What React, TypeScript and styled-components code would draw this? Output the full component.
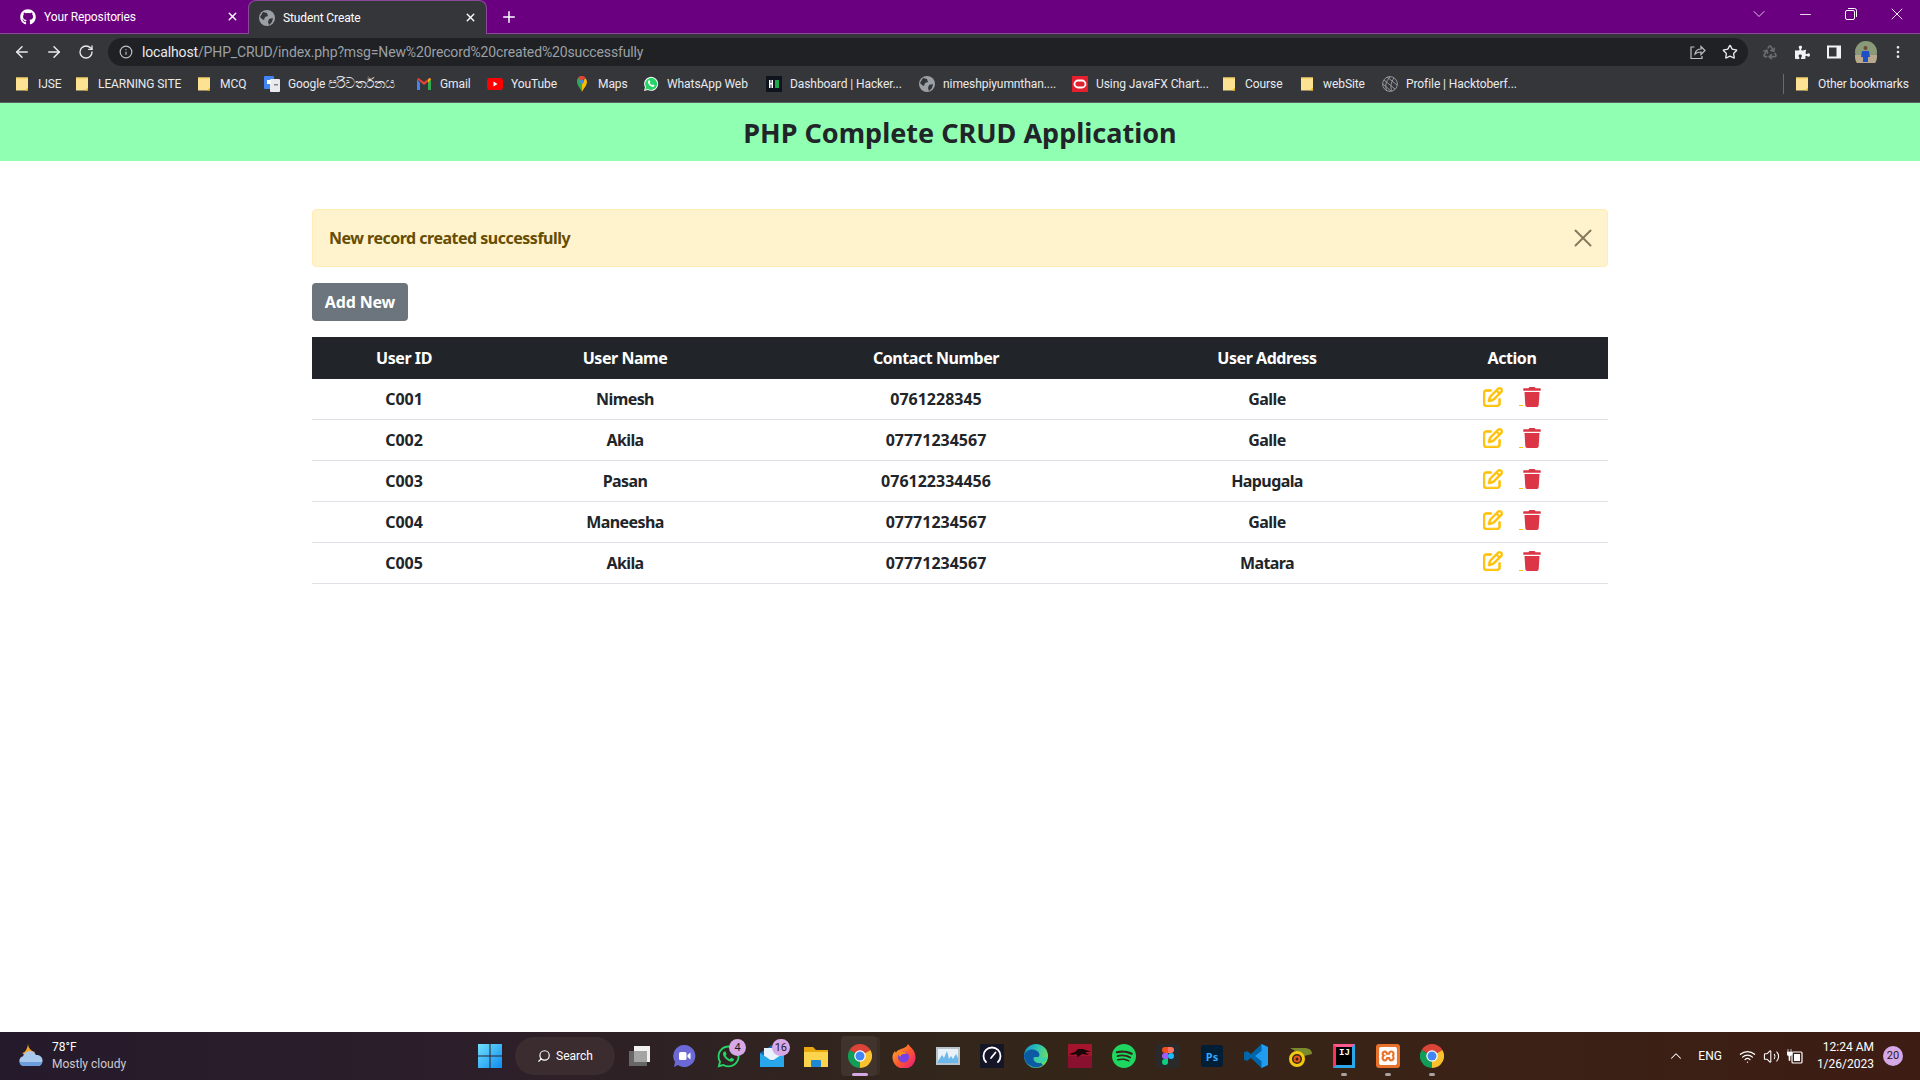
import React from 'react';
import styled, { createGlobalStyle } from 'styled-components';
import { ArrowLeft, ArrowRight, ChevronDown, ChevronUp, Info, Minus, MoreVertical, Plus, Recycle, RotateCw, Search, Star, Volume2, Wifi, X } from 'lucide-react';
import { FaGithub, FaPuzzlePiece, FaTrash, FaWhatsapp } from 'react-icons/fa';
import { FaRegPenToSquare } from 'react-icons/fa6';
import { SiSpotify, SiXampp } from 'react-icons/si';

const GlobalStyle = createGlobalStyle`
  html, body {
    margin: 0;
    padding: 0;
    background: #fff;
  }
  * {
    box-sizing: border-box;
  }
`;

const users = [
  { id: 'C001', name: 'Nimesh', contact: '0761228345', address: 'Galle' },
  { id: 'C002', name: 'Akila', contact: '07771234567', address: 'Galle' },
  { id: 'C003', name: 'Pasan', contact: '076122334456', address: 'Hapugala' },
  { id: 'C004', name: 'Maneesha', contact: '07771234567', address: 'Galle' },
  { id: 'C005', name: 'Akila', contact: '07771234567', address: 'Matara' },
];

const Folder = () => (
  <svg width="16" height="16" viewBox="0 0 16 16">
    <path d="M2 1.500h12v13H2z" fill="#fde293" />
    <path d="M11 14.500l3-3v3z" fill="#f2b90f" />
    <path d="M2 1.500h12v1H2z" fill="#f2c94c" />
  </svg>
);

const Globe = ({ color = '#9aa0a6' }: { color?: string }) => (
  <svg width="16" height="16" viewBox="0 0 16 16">
    <circle cx="8" cy="8" r="8" fill={color} />
    <path d="M4 2l4 1 1 3-3 1-1 3-2-1-2-2zM10 9l4-1-1 4-3 3-1-3z" fill="#35363a" />
  </svg>
);

const Translate = () => (
  <svg width="16" height="16" viewBox="0 0 16 16">
    <rect x="0" y="0" width="10" height="13" rx="1" fill="#4285f4" />
    <rect x="6" y="3" width="10" height="13" rx="1" fill="#e8eaed" />
    <rect x="3" y="4" width="4" height="4" fill="#fff" />
    <rect x="10" y="8" width="4" height="1.5" fill="#80868b" />
  </svg>
);

const Gmail = () => (
  <svg width="16" height="16" viewBox="0 0 16 16">
    <path d="M1 3v11h3V7z" fill="#4285f4" />
    <path d="M15 3v11h-3V7z" fill="#34a853" />
    <path d="M1 3l7 6 7-6-1.5-1L8 6 2.500 2z" fill="#ea4335" />
    <path d="M15 3l-3 4V4l1.500-2z" fill="#fbbc04" />
  </svg>
);

const YouTube = () => (
  <svg width="16" height="16" viewBox="0 0 16 16">
    <rect x="0" y="2" width="16" height="12" rx="3" fill="#f00" />
    <path d="M6.500 5.500v5l4-2.500z" fill="#fff" />
  </svg>
);

const MapsPin = () => (
  <svg width="16" height="16" viewBox="0 0 16 16">
    <path d="M8 16c-1-3-5-6-5-10.500A5 5 0 0 1 8 0v16z" fill="#34a853" />
    <path d="M8 16c1-3 5-6 5-10.500A5 5 0 0 0 11 2L8 8z" fill="#fbbc04" />
    <path d="M4 2a5 5 0 0 1 7.500-.5L8 5z" fill="#ea4335" />
    <circle cx="8" cy="5.500" r="2" fill="#4285f4" />
  </svg>
);

const HackerRank = () => (
  <svg width="16" height="16" viewBox="0 0 16 16">
    <rect width="16" height="16" fill="#0e141e" />
    <path d="M3 4h1.500v3h1V4H7v8H5.500V8.500h-1V12H3z" fill="#fff" />
    <rect x="9" y="4" width="4" height="8" fill="#1ba94c" />
  </svg>
);

const Oracle = () => (
  <svg width="16" height="16" viewBox="0 0 16 16">
    <rect width="16" height="16" fill="#e5202e" />
    <rect x="2.500" y="4.500" width="11" height="7" rx="3.500" fill="none" stroke="#fff" strokeWidth="1.800" />
  </svg>
);

const Hacktoberfest = () => (
  <svg width="16" height="16" viewBox="0 0 16 16" fill="none" stroke="#9aa0a6" strokeWidth="0.900">
    <circle cx="8" cy="8" r="7.400" />
    <path d="M2 4l11 9M1 8l8 7M5 1l10 8M8 1C3 6 3 11 5 15M12 2c-3 4-4 9-2 13" />
  </svg>
);

const WhatsAppMark = () => (
  <svg width="16" height="16" viewBox="0 0 16 16">
    <path d="M1 15l1-3.800A7 7 0 1 1 4.800 14z" fill="#fff" />
    <path d="M2.200 13.800l.8-2.800A6 6 0 1 1 5 13z" fill="#25d366" />
    <path d="M5.500 4.500c1-.8 1.300 0 1.800 1.200.2.600-.5 1-.4 1.300.5 1 1 1.500 2 2 .4.100.7-.7 1.200-.5 1.300.6 1.800.8 1.200 1.700-1.200 1.500-3.500.3-5-1.200-1.300-1.400-1.800-3.300-.8-4.500z" fill="#fff" />
  </svg>
);

const bookmarks: { label: string; sinhala?: string; icon: React.ReactNode; width: number }[] = [
  { label: 'IJSE', icon: <Folder />, width: 20 },
  { label: 'LEARNING SITE', icon: <Folder />, width: 82 },
  { label: 'MCQ', icon: <Folder />, width: 28 },
  { label: 'Google ', sinhala: 'පරිවර්තනය', icon: <Translate />, width: 112 },
  { label: 'Gmail', icon: <Gmail />, width: 31 },
  { label: 'YouTube', icon: <YouTube />, width: 47 },
  { label: 'Maps', icon: <MapsPin />, width: 29 },
  { label: 'WhatsApp Web', icon: <WhatsAppMark />, width: 83 },
  { label: 'Dashboard | Hacker...', icon: <HackerRank />, width: 113 },
  { label: 'nimeshpiyumnthan....', icon: <Globe />, width: 113 },
  { label: 'Using JavaFX Chart...', icon: <Oracle />, width: 109 },
  { label: 'Course', icon: <Folder />, width: 38 },
  { label: 'webSite', icon: <Folder />, width: 43 },
  { label: 'Profile | Hacktoberf...', icon: <Hacktoberfest />, width: 110 },
];

const ChromeLogo = () => (
  <svg width="24" height="24" viewBox="0 0 48 48">
    <path d="M24 24L3.200 12A24 24 0 0 1 44.800 12z" fill="#db4437" />
    <path d="M24 24L44.800 12A24 24 0 0 1 24 48z" fill="#fbc02d" />
    <path d="M24 24L24 48A24 24 0 0 1 3.200 12z" fill="#0f9d58" />
    <circle cx="24" cy="24" r="11.500" fill="#fff" />
    <circle cx="24" cy="24" r="9" fill="#4285f4" />
  </svg>
);

const TaskView = () => (
  <svg width="24" height="24" viewBox="0 0 24 24">
    <rect x="6" y="2" width="16" height="16" fill="#f1f1f1" />
    <rect x="1" y="7" width="18" height="15" fill="#6c6c6c" fillOpacity="0.950" />
    <rect x="6" y="7" width="13" height="11" fill="#a5a5a5" />
  </svg>
);

const MeetIcon = () => (
  <svg width="24" height="24" viewBox="0 0 24 24">
    <path d="M12.500 1a11 11 0 1 1-6.500 20l-4 2 1-5A11 11 0 0 1 12.500 1z" fill="#6b69d6" />
    <rect x="7" y="8" width="7.500" height="8" rx="1.500" fill="#fff" />
    <path d="M15.500 11l3-2.500v7l-3-2.500z" fill="#fff" />
  </svg>
);

const MailIcon = () => (
  <svg width="24" height="24" viewBox="0 0 24 24">
    <path d="M0 9L12 1l12 8v13H0z" fill="#0f6cbd" />
    <path d="M4 4h16v12H4z" fill="#e8f3fb" />
    <path d="M0 9l12 8 12-8v14H0z" fill="#28a8ea" />
  </svg>
);

const FolderIcon = () => (
  <svg width="24" height="24" viewBox="0 0 24 24">
    <path d="M0 3h9l3 3h12v17H0z" fill="#e8a910" />
    <path d="M0 8h24v15H0z" fill="#fcd34d" />
    <rect x="7" y="16" width="10" height="7" rx="1" fill="#1e88d2" />
  </svg>
);

const FirefoxIcon = () => (
  <svg width="24" height="24" viewBox="0 0 24 24">
    <defs>
      <linearGradient id="ffox" x1="0" y1="0" x2="1" y2="1">
        <stop offset="0" stopColor="#ffbd2e" />
        <stop offset="0.500" stopColor="#ff5a2c" />
        <stop offset="1" stopColor="#e31587" />
      </linearGradient>
    </defs>
    <path d="M16 0c2 3 6 5 7 10a11.500 11.500 0 1 1-22 0l2-3 1 2c1-3 3-3 5-4 3-1 6-2 7-5z" fill="url(#ffox)" />
    <circle cx="11.500" cy="13" r="5.500" fill="#7542e5" />
    <path d="M5 9c3-2 8-2 10 1-3-1-6 0-7 3z" fill="#ff8a16" />
  </svg>
);

const MonitorIcon = () => (
  <svg width="24" height="24" viewBox="0 0 24 24">
    <rect y="3" width="24" height="18" fill="#b8c4cc" />
    <rect x="2" y="5" width="20" height="14" fill="#e8f2f8" />
    <path d="M2 17l4-6 2 3 3-7 2 8 2-3 2 3 3-5 2 4v5H2z" fill="#6db8ea" />
  </svg>
);

const SpeedIcon = () => (
  <svg width="24" height="24" viewBox="0 0 24 24" fill="none">
    <rect width="24" height="24" fill="#141526" />
    <path d="M6 18a8.500 8.500 0 1 1 12 0" stroke="#fff" strokeWidth="1.800" strokeLinecap="round" />
    <path d="M11 14l4.500-5.500" stroke="#fff" strokeWidth="1.800" strokeLinecap="round" />
  </svg>
);

const EdgeIcon = () => (
  <svg width="24" height="24" viewBox="0 0 24 24">
    <defs>
      <linearGradient id="edge" x1="0" y1="0" x2="1" y2="0.500">
        <stop offset="0" stopColor="#0c8fd6" />
        <stop offset="0.550" stopColor="#30c5b0" />
        <stop offset="1" stopColor="#6fdc5c" />
      </linearGradient>
    </defs>
    <circle cx="12" cy="12" r="12" fill="url(#edge)" />
    <path d="M0 12C1 6 8 4 13 7c3 2 3 5 1 6h-4c-2 3 2 7 7 6l2 2a12 12 0 0 1-19-9z" fill="#0c59a4" />
    <path d="M14 13h10c-1 3-3 6-7 6-4 0-7-3-5-6z" fill="#3bd1a5" />
  </svg>
);

const KaliIcon = () => (
  <svg width="24" height="24" viewBox="0 0 24 24">
    <rect width="24" height="24" fill="#a5142d" />
    <rect y="12" width="24" height="12" fill="#8a1030" />
    <path d="M1 10l6-2 3-3 5 0 8 3-6 0 4 3-7-1-4 3-2-3-4 1z" fill="#1a0508" />
  </svg>
);

const FigmaIcon = () => (
  <svg width="24" height="24" viewBox="0 0 24 24">
    <rect width="24" height="24" rx="3" fill="#2a2a2a" />
    <path d="M12 3H9a3 3 0 0 0 0 6h3z" fill="#f24e1e" />
    <path d="M12 3h3a3 3 0 0 1 0 6h-3z" fill="#ff7262" />
    <path d="M12 9H9a3 3 0 0 0 0 6h3z" fill="#a259ff" />
    <circle cx="15" cy="12" r="3" fill="#1abcfe" />
    <path d="M9 15h3v3a3 3 0 1 1-3-3z" fill="#0acf83" />
  </svg>
);

const PsIcon = styled.span`
  display: flex;
  align-items: center;
  justify-content: center;
  width: 22px;
  height: 22px;
  border-radius: 3px;
  background: #001e36;
  color: #31a8ff;
  font-family: 'Noto Sans', sans-serif;
  font-size: 11px;
  font-weight: 700;
`;

const VsCodeIcon = () => (
  <svg width="24" height="24" viewBox="0 0 24 24">
    <path d="M17.500 0L24 3v18l-6.500 3L7 14l-4 3-3-1.500v-7L3 7l4 3z" fill="#0065a9" />
    <path d="M17.500 0L24 3v18l-6.500 3V17L11 12l6.500-5z" fill="#1f9cf0" />
  </svg>
);

const ChameleonIcon = () => (
  <svg width="24" height="24" viewBox="0 0 24 24" fill="none">
    <path d="M2 4h14c5 0 8 2 8 6l-8 2z" fill="#7c8a2e" />
    <circle cx="9" cy="15" r="6.500" stroke="#f2c811" strokeWidth="3" />
    <circle cx="9" cy="15" r="2.500" stroke="#e5571b" strokeWidth="2" />
  </svg>
);

const IntellijIcon = styled.span`
  display: flex;
  flex-direction: column;
  justify-content: flex-start;
  width: 22px;
  height: 24px;
  padding: 2px 3px;
  border: 3px solid;
  border-color: #fc5a8f #2aa7e8 #2aa7e8 #fe315d;
  background: #000;
  color: #fff;
  font-family: 'Liberation Mono', monospace;
  font-size: 9px;
  font-weight: 700;
  line-height: 9px;
`;

const XamppIcon = styled.span`
  display: flex;
  align-items: center;
  justify-content: center;
  width: 24px;
  height: 24px;
  border-radius: 3px;
  background: #e8712c;
  color: #fff;
  font-size: 18px;
`;

const SharePage = () => (
  <svg width="16" height="16" viewBox="0 0 16 16" fill="none" stroke="#bdc1c6" strokeWidth="1.200">
    <path d="M4.500 3H1v11.500h11V12" />
    <path d="M5 10c.5-3 3-5 6-5V2.500l4 4-4 4V8c-2.500 0-4.500.5-6 2z" />
  </svg>
);

const SidePanel = () => (
  <svg width="16" height="16" viewBox="0 0 16 16">
    <rect x="1" y="1.500" width="14" height="13" fill="#f1f3f4" />
    <rect x="3" y="3.500" width="7.500" height="9" fill="#35363a" />
  </svg>
);

const Avatar = () => (
  <svg width="22" height="22" viewBox="0 0 22 22">
    <circle cx="11" cy="11" r="11" fill="#8a9a78" />
    <path d="M0 14h22v2a11 11 0 0 1-22 0z" fill="#b8a88c" />
    <circle cx="10.500" cy="7" r="2" fill="#6a4a38" />
    <path d="M7 10h7l1 6h-2v5H8v-5H6z" fill="#1f4fc4" />
  </svg>
);

const Restore = () => (
  <svg width="12" height="12" viewBox="0 0 12 12" fill="none" stroke="#fff" strokeWidth="1">
    <rect x="0.500" y="2.500" width="9" height="9" rx="1.500" />
    <path d="M3 .5h6.500a2 2 0 0 1 2 2V9" />
  </svg>
);

const WindowsLogo = () => (
  <svg width="24" height="24" viewBox="0 0 24 24">
    <defs>
      <linearGradient id="win" x1="0" y1="0" x2="1" y2="1">
        <stop offset="0" stopColor="#6fe0fb" />
        <stop offset="1" stopColor="#0f8cf0" />
      </linearGradient>
    </defs>
    <path d="M0 0h11.500v11.500H0zM12.500 0H24v11.500H12.500zM0 12.500h11.500V24H0zM12.500 12.500H24V24H12.500z" fill="url(#win)" />
  </svg>
);

const WeatherIcon = () => (
  <svg width="28" height="28" viewBox="0 0 28 28">
    <path d="M11 1c0 5 3 8 7 9-2 3-8 5-13 1 3 0 6-5 6-10z" fill="#f5a524" />
    <path d="M7 24a5 5 0 0 1-1-9.800A7 7 0 0 1 19 13a5.500 5.500 0 0 1 2 11z" fill="#a9c8ee" />
    <path d="M3 20h22a4 4 0 0 1-4 4H7a4 4 0 0 1-4-4z" fill="#6e9ddd" />
  </svg>
);

const PlugBattery = () => (
  <svg width="16" height="16" viewBox="0 0 16 16">
    <rect x="5" y="4" width="10" height="11" rx="1" fill="none" stroke="#fff" strokeWidth="1.200" />
    <rect x="7" y="6" width="6" height="7" fill="#fff" />
    <path d="M1 1v3M4 1v3M0 4h5v2.500L3 8.500v4H2v-4L0 6.500z" stroke="#fff" strokeWidth="0.700" fill="#fff" />
  </svg>
);

const dockApps: { key: string; icon: React.ReactNode; badge?: string; active?: boolean; dot?: boolean }[] = [
  { key: 'taskview', icon: <TaskView /> },
  { key: 'meet', icon: <MeetIcon /> },
  { key: 'whatsapp', icon: <FaWhatsapp size={25} color="#25d366" />, badge: '4' },
  { key: 'mail', icon: <MailIcon />, badge: '16' },
  { key: 'files', icon: <FolderIcon /> },
  { key: 'chrome', icon: <ChromeLogo />, active: true },
  { key: 'firefox', icon: <FirefoxIcon /> },
  { key: 'monitor', icon: <MonitorIcon /> },
  { key: 'speed', icon: <SpeedIcon /> },
  { key: 'edge', icon: <EdgeIcon /> },
  { key: 'kali', icon: <KaliIcon /> },
  { key: 'spotify', icon: <SiSpotify size={24} color="#1ed760" /> },
  { key: 'figma', icon: <FigmaIcon /> },
  { key: 'ps', icon: <PsIcon>Ps</PsIcon> },
  { key: 'vscode', icon: <VsCodeIcon /> },
  { key: 'chameleon', icon: <ChameleonIcon /> },
  { key: 'idea', icon: <IntellijIcon>IJ</IntellijIcon>, dot: true },
  { key: 'xampp', icon: <XamppIcon><SiXampp /></XamppIcon>, dot: true },
  { key: 'chrome2', icon: <ChromeLogo />, dot: true },
];

export default function App() {
  return (
    <Page>
      <GlobalStyle />
      <TabStrip>
        <Tab>
          <FaGithub size={16} color="#fff" />
          <TabTitle>Your Repositories</TabTitle>
          <X size={13} color="#fff" strokeWidth={2.5} />
        </Tab>
        <ActiveTab>
          <Globe />
          <TabTitle>Student Create</TabTitle>
          <X size={13} color="#fff" strokeWidth={2.5} />
        </ActiveTab>
        <NewTab>
          <Plus size={18} color="#fff" strokeWidth={2} />
        </NewTab>
        <WindowControls>
          <WindowButton><ChevronDown size={20} color="#e6d6ea" strokeWidth={1.1} /></WindowButton>
          <WindowButton><Minus size={17} color="#fff" strokeWidth={1.2} /></WindowButton>
          <WindowButton><Restore /></WindowButton>
          <WindowButton><X size={20} color="#fff" strokeWidth={1.1} /></WindowButton>
        </WindowControls>
      </TabStrip>

      <Toolbar>
        <NavButton><ArrowLeft size={18} color="#e8eaed" strokeWidth={2} /></NavButton>
        <NavButton><ArrowRight size={18} color="#e8eaed" strokeWidth={2} /></NavButton>
        <NavButton><RotateCw size={16} color="#e8eaed" strokeWidth={2} /></NavButton>
        <Omnibox>
          <Info size={14} color="#bdc1c6" />
          <UrlText>
            <UrlHost>localhost</UrlHost>/PHP_CRUD/index.php?msg=New%20record%20created%20successfully
          </UrlText>
          <OmniActions>
            <SharePage />
            <Star size={16} color="#e8eaed" strokeWidth={2} />
          </OmniActions>
        </Omnibox>
        <ExtensionGroup>
          <ExtensionButton><Recycle size={16} color="#6a6b6e" strokeWidth={2.5} /></ExtensionButton>
          <ExtensionButton><FaPuzzlePiece size={15} color="#f1f3f4" /></ExtensionButton>
          <ExtensionButton><SidePanel /></ExtensionButton>
          <ExtensionButton><Avatar /></ExtensionButton>
          <ExtensionButton><MoreVertical size={16} color="#e8eaed" strokeWidth={2} /></ExtensionButton>
        </ExtensionGroup>
      </Toolbar>

      <BookmarkBar>
        {bookmarks.map((b) => (
          <Bookmark key={b.label}>
            {b.icon}
            <BookmarkLabel $w={b.width}>
              {b.label}
              {b.sinhala && <SinhalaText>{b.sinhala}</SinhalaText>}
            </BookmarkLabel>
          </Bookmark>
        ))}
        <OtherBookmarks>
          <Folder />
          <BookmarkLabel $w={92}>Other bookmarks</BookmarkLabel>
        </OtherBookmarks>
      </BookmarkBar>

      <Viewport>
        <Banner>PHP Complete CRUD Application</Banner>
        <Container>
          <Alert>
            New record created successfully
            <X size={30} color="#857a5e" strokeWidth={1.6} />
          </Alert>
          <AddButton>Add New</AddButton>
          <UsersTable>
            <colgroup>
              <col width="184" />
              <col width="258" />
              <col width="364" />
              <col width="298" />
              <col width="192" />
            </colgroup>
            <thead>
              <tr>
                <HeadCell>User ID</HeadCell>
                <HeadCell>User Name</HeadCell>
                <HeadCell>Contact Number</HeadCell>
                <HeadCell>User Address</HeadCell>
                <HeadCell>Action</HeadCell>
              </tr>
            </thead>
            <tbody>
              {users.map((u) => (
                <UserRow key={u.id}>
                  <Cell>{u.id}</Cell>
                  <Cell $tight>{u.name}</Cell>
                  <Cell>{u.contact}</Cell>
                  <Cell $tight>{u.address}</Cell>
                  <Cell>
                    <Actions>
                      <EditIcon />
                      <Underscore />
                      <TrashIcon />
                    </Actions>
                  </Cell>
                </UserRow>
              ))}
            </tbody>
          </UsersTable>
        </Container>
      </Viewport>

      <Taskbar>
        <WeatherWidget>
          <WeatherIcon />
          <WeatherText>
            <WeatherTemp>78°F</WeatherTemp>
            <WeatherDesc>Mostly cloudy</WeatherDesc>
          </WeatherText>
        </WeatherWidget>
        <DockButton><WindowsLogo /></DockButton>
        <SearchPill>
          <SearchGlyph size={14} color="#fff" />
          Search
        </SearchPill>
        <Dock>
          {dockApps.map((app) => (
            <DockButton key={app.key} $active={app.active}>
              {app.icon}
              {app.badge && <DockBadge>{app.badge}</DockBadge>}
              {app.active && <ActiveBar />}
              {app.dot && <RunningDot />}
            </DockButton>
          ))}
        </Dock>
        <Tray>
          <ChevronUp size={18} color="#fff" strokeWidth={1.4} />
          <TrayLang>ENG</TrayLang>
          <TrayIcons>
            <Wifi size={17} color="#fff" strokeWidth={1.8} />
            <Volume2 size={17} color="#fff" strokeWidth={1.5} />
            <PlugBattery />
          </TrayIcons>
          <Clock>
            <span>12:24 AM</span>
            <span>1/26/2023</span>
          </Clock>
          <NotificationBadge>20</NotificationBadge>
        </Tray>
      </Taskbar>
    </Page>
  );
}

const Page = styled.div`
  display: flex;
  flex-direction: column;
  width: 100%;
  height: 100vh;
  overflow: hidden;
  font-family: 'Noto Sans', sans-serif;
`;

const TabStrip = styled.div`
  display: flex;
  align-items: flex-end;
  height: 34px;
  background: #6a0080;
  border-bottom: 1px solid #8b4a99;
  color: #fff;
  font-family: Roboto, sans-serif;
  font-size: 12px;
`;

const Tab = styled.div`
  display: flex;
  align-items: center;
  width: 248px;
  height: 33px;
  padding: 0 9px 0 20px;
  gap: 8px;
`;

const ActiveTab = styled(Tab)`
  width: 239px;
  height: 34px;
  margin-bottom: -1px;
  padding: 0 9px 0 10px;
  gap: 8px;
  background: #35363a;
  border: 1px solid #8b4a99;
  border-bottom: none;
  border-radius: 8px 8px 0 0;
`;

const TabTitle = styled.span`
  flex: 1;
  letter-spacing: -0.12px;
  white-space: nowrap;
`;

const NewTab = styled.div`
  display: flex;
  align-items: center;
  justify-content: center;
  width: 44px;
  height: 33px;
`;

const WindowControls = styled.div`
  display: flex;
  align-items: center;
  align-self: flex-start;
  height: 28px;
  margin-left: auto;
`;

const WindowButton = styled.div`
  display: flex;
  align-items: center;
  justify-content: center;
  width: 46px;
  height: 28px;
`;

const Toolbar = styled.div`
  display: flex;
  align-items: center;
  height: 36px;
  padding-left: 6px;
  background: #35363a;
`;

const NavButton = styled.div`
  display: flex;
  align-items: center;
  justify-content: center;
  width: 32px;
  height: 28px;
`;

const Omnibox = styled.div`
  display: flex;
  align-items: center;
  width: 1640px;
  height: 28px;
  margin-left: 6px;
  padding: 0 10px 0 11px;
  background: #202124;
  border-radius: 14px;
`;

const UrlText = styled.div`
  margin-left: 9px;
  color: #9aa0a6;
  font-family: Roboto, sans-serif;
  font-size: 14px;
  letter-spacing: -0.14px;
  white-space: nowrap;
`;

const UrlHost = styled.span`
  color: #e8eaed;
`;

const OmniActions = styled.div`
  display: flex;
  align-items: center;
  gap: 16px;
  margin-left: auto;
`;

const ExtensionGroup = styled.div`
  display: flex;
  align-items: center;
  margin-left: 6px;
`;

const ExtensionButton = styled.div`
  display: flex;
  align-items: center;
  justify-content: center;
  width: 32px;
  height: 28px;
`;

const BookmarkBar = styled.div`
  display: flex;
  align-items: center;
  height: 33px;
  padding: 0 0 5px 14px;
  gap: 16px;
  background: #35363a;
  border-bottom: 1px solid #5f6063;
  color: #e8eaed;
  font-family: Roboto, sans-serif;
  font-size: 12px;
`;

const Bookmark = styled.div`
  display: flex;
  align-items: center;
  gap: 8px;
`;

const BookmarkLabel = styled.span<{ $w: number }>`
  width: ${(p) => p.$w}px;
  letter-spacing: -0.08px;
  white-space: nowrap;
`;

const SinhalaText = styled.span`
  font-size: 14px;
`;

const OtherBookmarks = styled(Bookmark)`
  margin-left: auto;
  padding: 0 10px 0 10px;
  border-left: 1px solid #6a6b6e;
  height: 20px;
`;

const Viewport = styled.div`
  flex: 1;
  min-height: 0;
  background: #fff;
`;

const Banner = styled.div`
  display: flex;
  align-items: center;
  justify-content: center;
  height: 58px;
  background: #90ffb2;
  color: #212529;
  font-size: 27px;
  font-weight: 700;
`;

const Container = styled.div`
  display: flex;
  flex-direction: column;
  align-items: flex-start;
  width: 1296px;
  margin: 48px auto 0;
`;

const Alert = styled.div`
  display: flex;
  align-items: center;
  justify-content: space-between;
  width: 100%;
  height: 58px;
  padding: 0 9px 0 16px;
  background: #fff3cd;
  border: 1px solid #ffecb5;
  border-radius: 4px;
  color: #664d03;
  font-size: 16px;
  font-weight: 700;
  letter-spacing: -0.5px;
`;

const AddButton = styled.button`
  height: 38px;
  width: 96px;
  margin-top: 16px;
  padding: 0;
  background: #6c757d;
  border: none;
  border-radius: 4px;
  color: #fff;
  font-family: inherit;
  font-size: 16px;
  font-weight: 700;
  letter-spacing: -0.15px;
`;

const UsersTable = styled.table`
  width: 100%;
  margin-top: 16px;
  border-collapse: collapse;
  table-layout: fixed;
`;

const HeadCell = styled.th`
  height: 42px;
  padding: 0 0 1px;
  background: #212529;
  color: #fff;
  font-size: 16px;
  font-weight: 700;
  letter-spacing: -0.45px;
  text-align: center;
`;

const Cell = styled.td<{ $tight?: boolean }>`
  height: 41px;
  padding: 1px 0 0;
  border-bottom: 1px solid #dee2e6;
  color: #212529;
  font-size: 16px;
  font-weight: 700;
  letter-spacing: ${(p) => (p.$tight ? '-0.6px' : '0')};
  text-align: center;
`;

const UserRow = styled.tr`
  &:first-child ${Cell} {
    height: 40px;
    padding-top: 0;
  }
`;

const Actions = styled.div`
  display: flex;
  align-items: center;
  justify-content: center;
  padding-bottom: 4px;
`;

const EditIcon = styled(FaRegPenToSquare)`
  width: 20px;
  height: 20px;
  color: #ffc107;
  stroke: #ffc107;
  stroke-width: 18px;
`;

const TrashIcon = styled(FaTrash)`
  width: 18px;
  height: 20px;
  color: #dc3545;
`;

const Underscore = styled.span`
  width: 4px;
  height: 1px;
  margin: 18px 0 0 16px;
  background: #ffc107;
`;

const Taskbar = styled.div`
  display: flex;
  align-items: center;
  height: 48px;
  background: linear-gradient(90deg, #251a2b 0%, #2c1f2a 25%, #33261a 50%, #3a2216 75%, #3d1c14 100%);
  color: #fff;
  font-family: Roboto, sans-serif;
`;

const WeatherWidget = styled.div`
  display: flex;
  align-items: center;
  width: 468px;
  padding-left: 17px;
  gap: 7px;
`;

const WeatherText = styled.div`
  display: flex;
  flex-direction: column;
  font-size: 12px;
  line-height: 17px;
`;

const WeatherTemp = styled.span`
  color: #fff;
`;

const WeatherDesc = styled.span`
  color: #cfc9d0;
`;

const SearchPill = styled.div`
  display: flex;
  align-items: center;
  justify-content: center;
  width: 100px;
  height: 38px;
  margin-left: 3px;
  gap: 5px;
  background: #3a2c2f;
  border-radius: 19px;
  font-size: 12px;
`;

const SearchGlyph = styled(Search)`
  transform: scaleX(-1);
`;

const Dock = styled.div`
  display: flex;
  margin-left: 3px;
`;

const DockButton = styled.div<{ $active?: boolean }>`
  position: relative;
  display: flex;
  align-items: center;
  justify-content: center;
  width: 44px;
  height: 40px;

  ${(p) =>
    p.$active &&
    `
    &::before {
      content: '';
      position: absolute;
      inset: 0 5px 0 3px;
      border-radius: 4px;
      background: rgba(255, 255, 255, 0.07);
      box-shadow: 4px 0 0 -1px rgba(255, 255, 255, 0.04);
    }
    & > svg {
      position: relative;
    }
  `}
`;

const DockBadge = styled.span`
  position: absolute;
  top: 3px;
  right: 4px;
  min-width: 17px;
  height: 17px;
  padding: 0 3px;
  border-radius: 9px;
  background: #d7a8e6;
  color: #1f1a20;
  font-size: 11px;
  line-height: 17px;
  text-align: center;
`;

const ActiveBar = styled.span`
  position: absolute;
  bottom: 0;
  left: 14px;
  width: 16px;
  height: 3px;
  border-radius: 2px;
  background: #d7a8e6;
`;

const RunningDot = styled.span`
  position: absolute;
  bottom: 0;
  left: 19px;
  width: 6px;
  height: 3px;
  border-radius: 2px;
  background: #a9a3a0;
`;

const Tray = styled.div`
  display: flex;
  align-items: center;
  margin-left: auto;
  padding-right: 17px;
  font-size: 12px;
`;

const TrayLang = styled.span`
  margin-left: 13px;
`;

const TrayIcons = styled.div`
  display: flex;
  align-items: center;
  gap: 7px;
  margin-left: 17px;
`;

const Clock = styled.div`
  display: flex;
  flex-direction: column;
  align-items: flex-end;
  margin-left: 14px;
  line-height: 17px;
`;

const NotificationBadge = styled.span`
  width: 20px;
  height: 20px;
  margin-left: 9px;
  border-radius: 50%;
  background: #d7a8e6;
  color: #1f1a20;
  font-size: 11px;
  line-height: 20px;
  text-align: center;
`;
